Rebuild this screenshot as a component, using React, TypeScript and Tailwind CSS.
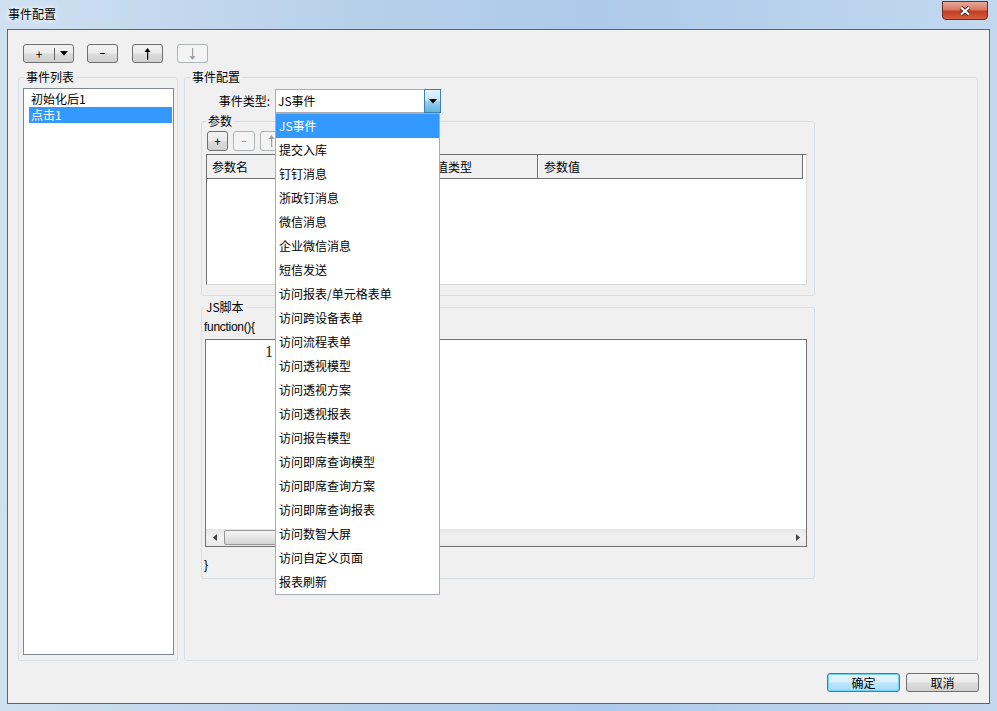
import type { ReactNode } from 'react';

const eventTypes = [
  'JS事件',
  '提交入库',
  '钉钉消息',
  '浙政钉消息',
  '微信消息',
  '企业微信消息',
  '短信发送',
  '访问报表/单元格表单',
  '访问跨设备表单',
  '访问流程表单',
  '访问透视模型',
  '访问透视方案',
  '访问透视报表',
  '访问报告模型',
  '访问即席查询模型',
  '访问即席查询方案',
  '访问即席查询报表',
  '访问数智大屏',
  '访问自定义页面',
  '报表刷新',
];

// classic win7 push button
function WinButton({
  children,
  className = '',
  disabled = false,
  primary = false,
}: {
  children: ReactNode;
  className?: string;
  disabled?: boolean;
  primary?: boolean;
}) {
  let skin =
    'border-[#707070] bg-[linear-gradient(180deg,#f2f2f2_0%,#ebebeb_48%,#dddddd_52%,#cfcfcf_100%)] text-black';
  if (disabled) skin = 'border-[#adb2b5] bg-[#f4f4f4] text-[#a0a0a0]';
  if (primary)
    skin =
      'border-[#3c7fb1] bg-[linear-gradient(180deg,#eaf6fd_0%,#d9f0fc_48%,#bee6fd_52%,#a7d9f5_100%)] shadow-[inset_0_0_0_1px_#6fd3f7] text-black';
  return (
    <div className={`flex items-center justify-center border rounded-[3px] ${skin} ${className}`}>
      {children}
    </div>
  );
}

function UpArrow({ color = '#000' }: { color?: string }) {
  return (
    <svg width="7" height="12" viewBox="0 0 7 12">
      <polygon points="3.5,0 0.5,4 6.5,4" fill={color} />
      <rect x="3" y="3" width="1.2" height="9" fill={color} />
    </svg>
  );
}

function DownArrow({ color = '#000' }: { color?: string }) {
  return (
    <svg width="7" height="12" viewBox="0 0 7 12">
      <rect x="3" y="0" width="1.2" height="9" fill={color} />
      <polygon points="3.5,12 0.5,8 6.5,8" fill={color} />
    </svg>
  );
}

function Caret() {
  return (
    <svg width="8" height="5" viewBox="0 0 8 5">
      <polygon points="0,0 8,0 4,4.5" fill="#000" />
    </svg>
  );
}

export default function App() {
  return (
    <div className="w-[997px] h-[711px] overflow-hidden flex flex-col bg-[linear-gradient(90deg,#cfe0f1_0%,#b7d0ea_35%,#aecaea_60%,#c2d8ef_100%)] font-['Noto_Sans_CJK_SC',sans-serif] text-[12px] leading-[16px] text-black">
      {/* title bar */}
      <div className="h-[29px] flex items-start justify-between pl-[8px] pr-[9px]">
        <span className="mt-[6px] [text-shadow:0_0_5px_#ffffff,0_0_8px_#ffffff]">事件配置</span>
        <div className="mt-[1px] w-[46px] h-[19px] flex items-center justify-center rounded-b-[4px] border border-[#6e2a1f] bg-[linear-gradient(180deg,#e8a898_0%,#d87a63_45%,#c23d22_55%,#d2603f_100%)]">
          <svg width="12" height="10" viewBox="0 0 12 10">
            <path d="M2 1.5 L10 8.5 M10 1.5 L2 8.5" stroke="#4a1a12" strokeWidth="4" />
            <path d="M2 1.5 L10 8.5 M10 1.5 L2 8.5" stroke="#ffffff" strokeWidth="2.2" />
          </svg>
        </div>
      </div>

      {/* client area */}
      <div className="mx-[7px] h-[675px] border border-[#56677c] bg-[#f0f0f0] flex flex-col">
        {/* toolbar */}
        <div className="flex pl-[15px] pt-[14px] h-[33px]">
          <WinButton className="w-[51px] h-[19px]">
            <span className="w-[30px] text-center leading-[16px]">+</span>
            <span className="w-px h-[12px] bg-[#606060]" />
            <span className="flex-1 flex justify-center">
              <Caret />
            </span>
          </WinButton>
          <WinButton className="ml-[13px] w-[31px] h-[19px]">
            <span className="block w-[5px] h-px bg-black" />
          </WinButton>
          <WinButton className="ml-[14px] w-[31px] h-[19px]">
            <UpArrow />
          </WinButton>
          <WinButton disabled className="ml-[14px] w-[31px] h-[19px]">
            <DownArrow color="#a0a0a0" />
          </WinButton>
        </div>

        {/* groups */}
        <div className="flex pl-[10px] mt-[6px] h-[592px]">
          <fieldset className="w-[160px] h-[592px] border border-[#d5dfe5] rounded-[3px] pl-[4px] pr-[3px]">
            <legend className="ml-px px-[2px] leading-[16px]">事件列表</legend>
            <div className="mt-[3px] h-[567px] border border-[#828790] bg-white pt-[2px] pl-[5px] pr-px">
              <div className="h-[16px] pl-[2px] leading-[16px]">初始化后1</div>
              <div className="h-[16px] pl-[2px] leading-[16px] bg-[#3399ff] text-white">点击1</div>
            </div>
          </fieldset>

          <fieldset className="ml-[6px] w-[794px] h-[592px] border border-[#d5dfe5] rounded-[3px]">
            <legend className="ml-[5px] px-[2px] leading-[16px]">事件配置</legend>

            {/* event type row */}
            <div className="mt-[4px] flex items-center h-[24px]">
              <span className="w-[90px] pr-[5px] text-right">事件类型:</span>
              <div className="relative w-[166px] h-[24px]">
                <div className="h-full flex items-center border border-[#abadb3] bg-white">
                  <span className="flex-1 pl-[2px]">JS事件</span>
                  <div className="w-[17px] h-[24px] -mr-px -my-px flex items-center justify-center border border-[#3c7fb1] bg-[linear-gradient(180deg,#e5f4fc_0%,#c4e5f6_50%,#98d1ef_51%,#68b3db_100%)]">
                    <Caret />
                  </div>
                </div>
                {/* open dropdown list */}
                <div className="absolute left-0 top-full z-10 w-[165px] border border-[#a9aeb6] bg-white">
                  {eventTypes.map((t, i) => (
                    <div
                      key={t}
                      className={`h-[24px] leading-[24px] pl-[3px] whitespace-nowrap ${
                        i === 0 ? 'bg-[#3399ff] text-white' : ''
                      }`}
                    >
                      {t}
                    </div>
                  ))}
                </div>
              </div>
            </div>

            {/* params */}
            <fieldset className="ml-[16px] w-[614px] h-[183px] border border-[#d5dfe5] rounded-[3px]">
              <legend className="ml-[4px] px-[2px] leading-[16px]">参数</legend>
              <div className="mt-[2px] pl-[5px] flex gap-[5px]">
                <WinButton className="w-[21px] h-[20px]">
                  <span className="leading-[16px]">+</span>
                </WinButton>
                <WinButton disabled className="w-[22px] h-[20px]">
                  <span className="block w-[4px] h-px bg-[#a0a0a0]" />
                </WinButton>
                <WinButton disabled className="w-[22px] h-[20px]">
                  <UpArrow color="#a0a0a0" />
                </WinButton>
              </div>
              <div className="mt-[3px] ml-[4px] w-[601px] h-[131px] border border-t-[#6f6f6f] border-l-[#6f6f6f] border-r-[#d8d8d8] border-b-[#d8d8d8] bg-white">
                <div className="flex h-[24px] w-[596px] border-b border-[#6f6f6f] bg-[#f0f0f0]">
                  <div className="w-[200px] pl-[5px] leading-[23px] border-r border-[#8a8a8a]">参数名</div>
                  <div className="w-[131px] pl-[5px] leading-[23px] border-r border-[#6f6f6f]">参数值类型</div>
                  <div className="flex-1 pl-[5px] leading-[23px] border-r border-[#6f6f6f] border-l border-l-white">参数值</div>
                </div>
              </div>
            </fieldset>

            {/* js script */}
            <fieldset className="mt-[3px] ml-[16px] w-[614px] h-[280px] border border-[#d5dfe5] rounded-[3px]">
              <legend className="ml-[2px] px-[2px] leading-[16px]">JS脚本</legend>
              <div className="h-[24px] pt-[4px] pl-[2px] font-['Liberation_Sans',sans-serif] text-[12px] leading-[16px] tracking-[-0.3px]">
                function(){'{'}
              </div>
              <div className="ml-[3px] w-[602px] h-[208px] border border-[#707070] bg-white flex flex-col">
                <div className="flex-1">
                  <div className="w-[68px] pt-[3px] pr-[1px] text-right font-['Liberation_Serif',serif] text-[16px] leading-[18px] text-[#2a2222]">
                    1
                  </div>
                </div>
                <div className="h-[17px] flex items-center bg-[linear-gradient(180deg,#e6e6e6_0%,#f2f2f2_50%,#e9e9e9_100%)]">
                  <div className="w-[17px] flex justify-center">
                    <svg width="4" height="7" viewBox="0 0 4 7">
                      <polygon points="4,0 0,3.5 4,7" fill="#404040" />
                    </svg>
                  </div>
                  <div className="ml-[1px] w-[80px] h-[15px] rounded-[2px] border border-[#979797] bg-[linear-gradient(180deg,#f4f4f4_0%,#e6e6e6_50%,#d4d4d4_100%)]" />
                  <div className="flex-1" />
                  <div className="w-[17px] flex justify-center">
                    <svg width="4" height="7" viewBox="0 0 4 7">
                      <polygon points="0,0 4,3.5 0,7" fill="#404040" />
                    </svg>
                  </div>
                </div>
              </div>
              <div className="mt-[8px] h-[20px] pl-[2px] flex items-center font-['Liberation_Sans',sans-serif] text-[12px]">
                {'}'}
              </div>
            </fieldset>
          </fieldset>
        </div>

        {/* dialog buttons */}
        <div className="mt-[12px] flex justify-end pr-[10px]">
          <WinButton primary className="w-[73px] h-[19px]">
            确定
          </WinButton>
          <WinButton className="ml-[6px] w-[73px] h-[19px]">取消</WinButton>
        </div>
      </div>
    </div>
  );
}
